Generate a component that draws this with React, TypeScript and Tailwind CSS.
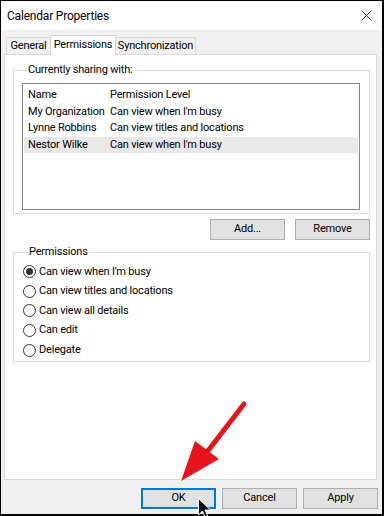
import React from "react";

const font = { fontFamily: 'Roboto, "Noto Sans", sans-serif' };

function Radio({ checked, label }: { checked?: boolean; label: string }) {
  return (
    <div className="flex items-center h-[19.6px]">
      <div className="w-[13px] h-[13px] rounded-full border border-[#333] bg-white flex items-center justify-center">
        {checked && <div className="w-[7px] h-[7px] rounded-full bg-[#333]" />}
      </div>
      <span className="ml-[3px] text-[11px] tracking-[-0.2px] text-[#000]">{label}</span>
    </div>
  );
}

function Btn({ label, primary }: { label: string; primary?: boolean }) {
  return (
    <div
      className={
        "w-[75px] h-[21px] flex items-center justify-center text-[11px] tracking-[-0.2px] text-black bg-[#e1e1e1] " +
        (primary ? "border-2 border-[#0078d7]" : "border border-[#adadad]")
      }
    >
      {label}
    </div>
  );
}

export default function App() {
  const rows = [
    ["My Organization", "Can view when I'm busy", false],
    ["Lynne Robbins", "Can view titles and locations", false],
    ["Nestor Wilke", "Can view when I'm busy", true],
  ] as const;
  return (
    <div style={font} className="w-[384px] h-[516px] bg-black pt-[1px] pl-[1px] pr-[2px] pb-[2px] relative overflow-hidden">
      <div className="w-full h-full bg-[#f0f0f0] flex flex-col">
        {/* title bar */}
        <div className="h-[29px] bg-white flex items-center justify-between pl-[6px] pr-[10px]">
          <span className="text-[12px] tracking-[-0.2px] text-black">Calendar Properties</span>
          <svg width="11" height="11" viewBox="0 0 11 11">
            <path d="M0.5 0.5 L10.5 10.5 M10.5 0.5 L0.5 10.5" stroke="#333" strokeWidth="1" />
          </svg>
        </div>
        {/* tabs */}
        <div className="flex items-end pl-[5px] mt-[5px] h-[20px] relative z-10">
          <div className="h-[17px] w-[45px] border border-b-0 border-[#d9d9d9] bg-[#f0f0f0] flex items-center justify-center text-[11px] tracking-[-0.2px] text-black mb-[1px]">General</div>
          <div className="h-[20px] w-[66px] border border-b-0 border-[#d9d9d9] bg-white flex items-center justify-center text-[11px] tracking-[-0.2px] text-black -mx-[1px]">Permissions</div>
          <div className="h-[17px] w-[81px] border border-b-0 border-[#d9d9d9] bg-[#f0f0f0] flex items-center justify-center text-[11px] tracking-[-0.2px] text-black mb-[1px]">Synchronization</div>
        </div>
        {/* panel */}
        <div className="ml-[3px] w-[373px] h-[426px] -mt-[1px] bg-white border border-[#d9d9d9] pl-[8px] pt-[7px]">
          <fieldset className="w-[357px] h-[152px] border border-[#dcdcdc] pl-[8px] pr-[9px] pt-[0px]">
            <legend className="ml-[5px] px-[1px] text-[11px] tracking-[-0.2px] text-black leading-[16px]">Currently sharing with:</legend>
            <div className="mt-[5px] w-[338px] h-[127px] border border-[#828790] bg-white pt-[3px] pl-[1px] pr-[1px]">
              <div className="flex h-[17px] items-center text-[11px] tracking-[-0.2px] text-black pl-[4px]">
                <span className="w-[82px]">Name</span>
                <span>Permission Level</span>
              </div>
              {rows.map(([n, p, sel]) => (
                <div key={n} className={"flex h-[16.3px] items-center text-[11px] tracking-[-0.2px] text-black pl-[4px] " + (sel ? "bg-[#e8e8e8]" : "")}>
                  <span className="w-[82px] whitespace-nowrap">{n}</span>
                  <span className="whitespace-nowrap">{p}</span>
                </div>
              ))}
            </div>
          </fieldset>
          <div className="w-[357px] flex justify-end gap-[10px] mt-[5px]">
            <Btn label="Add..." />
            <Btn label="Remove" />
          </div>
          <fieldset className="mt-[4px] w-[357px] h-[118px] border border-[#dcdcdc] pl-[9px] pt-[2px]">
            <legend className="ml-[5px] px-[1px] text-[11px] tracking-[-0.2px] text-black leading-[16px]">Permissions</legend>
            <Radio checked label="Can view when I'm busy" />
            <Radio label="Can view titles and locations" />
            <Radio label="Can view all details" />
            <Radio label="Can edit" />
            <Radio label="Delegate" />
          </fieldset>
        </div>
        {/* bottom buttons */}
        <div className="flex justify-end gap-[6px] pr-[4px] mt-[8px]">
          <Btn label="OK" primary />
          <Btn label="Cancel" />
          <Btn label="Apply" />
        </div>
      </div>
      {/* red arrow annotation */}
      <svg className="absolute left-0 top-0 pointer-events-none" width="384" height="516">
        <line x1="244" y1="404" x2="204" y2="456" stroke="#e8141b" strokeWidth="5" strokeLinecap="round" />
        <polygon points="181,481 195,441 219,459" fill="#e8141b" />
      </svg>
      {/* mouse cursor */}
      <svg className="absolute left-[198px] top-[498px] pointer-events-none" width="14" height="22" viewBox="0 0 14 22">
        <path d="M0.5 0.5 L0.5 17 L4.5 13 L7.5 20 L10 19 L7 12 L12.5 12 Z" fill="#000" stroke="#fff" strokeWidth="1" />
      </svg>
    </div>
  );
}
